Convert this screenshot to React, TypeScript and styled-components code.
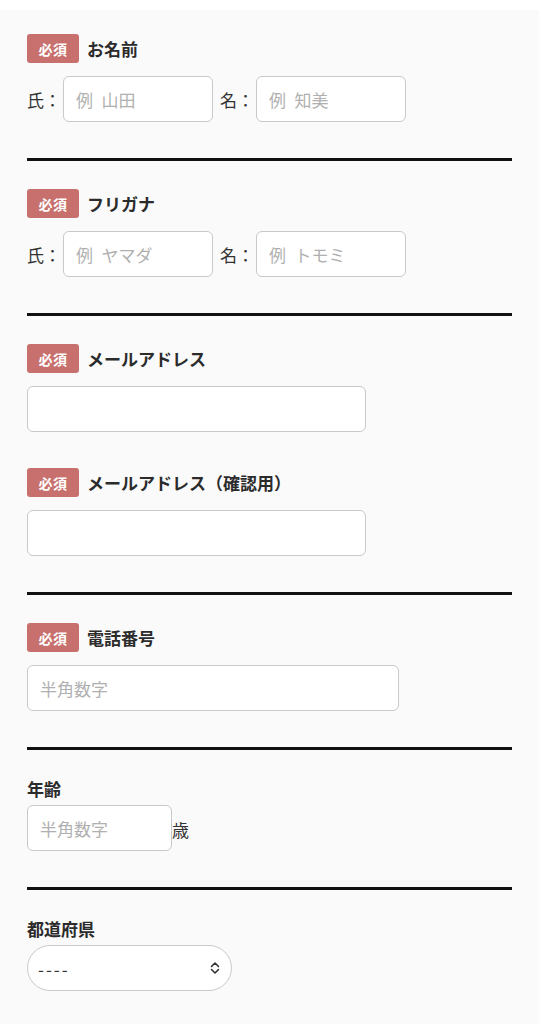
import React from "react";
import styled, { createGlobalStyle } from "styled-components";

const Global = createGlobalStyle`
  html, body { margin: 0; padding: 0; background: #fafafa; }
  body {
    font-family: "Noto Sans CJK JP", "Noto Sans", sans-serif;
    color: #333;
  }
  * { box-sizing: border-box; }
`;

const TopBand = styled.div`
  height: 10px;
  background: #ffffff;
`;

const Form = styled.form`
  padding: 0 27px;
`;

const Section = styled.section<{ $first?: boolean; $plain?: boolean }>`
  padding-top: ${(p) => (p.$first ? 24 : p.$plain ? 26 : 28)}px;
  padding-bottom: 36px;
  border-bottom: 3px solid #111;
  display: flex;
  flex-direction: column;
  gap: 36px;
  &:last-child { border-bottom: none; }
`;

const Field = styled.div`
  display: flex;
  flex-direction: column;
`;

const LabelRow = styled.div<{ $plain?: boolean }>`
  display: flex;
  align-items: center;
  gap: 8px;
  height: ${(p) => (p.$plain ? 24 : 29)}px;
  margin-bottom: ${(p) => (p.$plain ? 5 : 13)}px;
`;

const Badge = styled.span`
  display: inline-flex;
  align-items: center;
  justify-content: center;
  width: 52px;
  height: 29px;
  border-radius: 3px;
  background: #c8706d;
  color: #fff;
  font-size: 14px;
  font-weight: 700;
  letter-spacing: 0.5px;
`;

const LabelText = styled.span`
  font-size: 17px;
  font-weight: 700;
  color: #2b2b2b;
`;

const Row = styled.div`
  display: flex;
  align-items: center;
`;

const Prefix = styled.span<{ $lead?: boolean }>`
  font-size: 17px;
  color: #333;
  margin-left: ${(p) => (p.$lead ? 0 : 7)}px;
  margin-right: 2px;
  white-space: nowrap;
`;

const Input = styled.input<{ $w: number }>`
  width: ${(p) => p.$w}px;
  height: 46px;
  border: 1px solid #c9c9c9;
  border-radius: 6px;
  background: #fff;
  padding: 0 12px;
  font-family: inherit;
  font-size: 17px;
  color: #333;
  outline: none;
  &::placeholder { color: #b0b0b0; }
`;

const Suffix = styled.span`
  font-size: 17px;
  color: #333;
  margin-top: 2px;
`;

const SelectWrap = styled.div`
  position: relative;
  width: 205px;
  height: 46px;
`;

const Select = styled.select`
  appearance: none;
  -webkit-appearance: none;
  width: 100%;
  height: 100%;
  border: 1px solid #c9c9c9;
  border-radius: 23px;
  background: #fff;
  padding: 0 30px 0 10px;
  font-family: inherit;
  font-size: 17px;
  letter-spacing: 2px;
  color: #333;
  outline: none;
`;

const Chevron = styled.svg`
  position: absolute;
  right: 12px;
  top: 50%;
  transform: translateY(-50%);
  pointer-events: none;
`;

const Required = () => <Badge>必須</Badge>;

export default function App() {
  return (
    <>
      <Global />
      <TopBand />
      <Form>
        <Section $first>
          <Field>
            <LabelRow>
              <Required />
              <LabelText>お名前</LabelText>
            </LabelRow>
            <Row>
              <Prefix $lead>氏：</Prefix>
              <Input $w={150} placeholder={"例\u2002山田"} />
              <Prefix>名：</Prefix>
              <Input $w={150} placeholder={"例\u2002知美"} />
            </Row>
          </Field>
        </Section>

        <Section>
          <Field>
            <LabelRow>
              <Required />
              <LabelText>フリガナ</LabelText>
            </LabelRow>
            <Row>
              <Prefix $lead>氏：</Prefix>
              <Input $w={150} placeholder={"例\u2002ヤマダ"} />
              <Prefix>名：</Prefix>
              <Input $w={150} placeholder={"例\u2002トモミ"} />
            </Row>
          </Field>
        </Section>

        <Section>
          <Field>
            <LabelRow>
              <Required />
              <LabelText>メールアドレス</LabelText>
            </LabelRow>
            <Input $w={339} type="email" />
          </Field>
          <Field>
            <LabelRow>
              <Required />
              <LabelText>メールアドレス（確認用）</LabelText>
            </LabelRow>
            <Input $w={339} type="email" />
          </Field>
        </Section>

        <Section>
          <Field>
            <LabelRow>
              <Required />
              <LabelText>電話番号</LabelText>
            </LabelRow>
            <Input $w={372} placeholder="半角数字" />
          </Field>
        </Section>

        <Section $plain>
          <Field>
            <LabelRow $plain>
              <LabelText>年齢</LabelText>
            </LabelRow>
            <Row>
              <Input $w={145} placeholder="半角数字" />
              <Suffix>歳</Suffix>
            </Row>
          </Field>
        </Section>

        <Section $plain>
          <Field>
            <LabelRow $plain>
              <LabelText>都道府県</LabelText>
            </LabelRow>
            <SelectWrap>
              <Select defaultValue="">
                <option value="">----</option>
              </Select>
              <Chevron width="10" height="14" viewBox="0 0 10 14" fill="none">
                <polyline points="1.5,5.5 5,2 8.5,5.5" stroke="#333" strokeWidth="1.6" strokeLinecap="round" strokeLinejoin="round" />
                <polyline points="1.5,8.5 5,12 8.5,8.5" stroke="#333" strokeWidth="1.6" strokeLinecap="round" strokeLinejoin="round" />
              </Chevron>
            </SelectWrap>
          </Field>
        </Section>
      </Form>
    </>
  );
}
